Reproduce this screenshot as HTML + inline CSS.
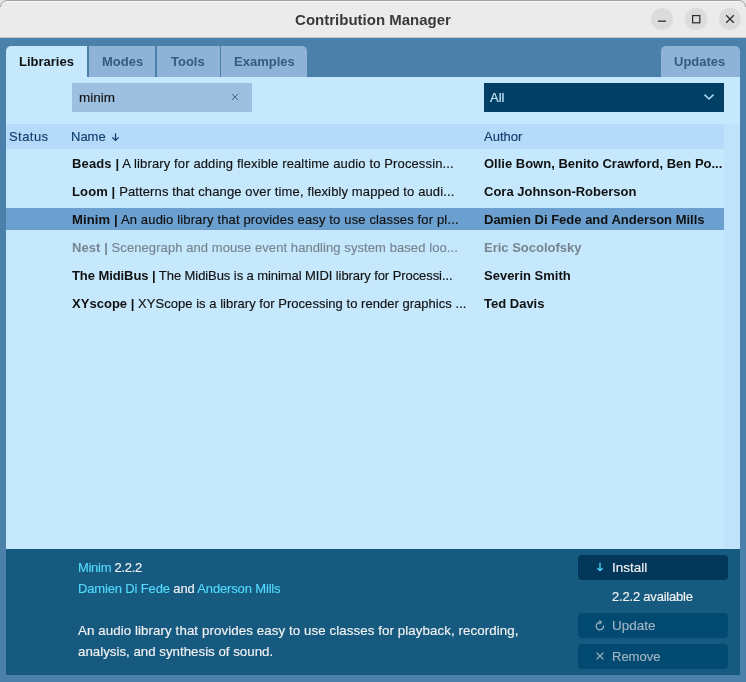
<!DOCTYPE html>
<html><head><meta charset="utf-8">
<style>
*{margin:0;padding:0;box-sizing:border-box}
html,body{-webkit-font-smoothing:antialiased;width:746px;height:682px;overflow:hidden;background:#4a80aa;font-family:"Liberation Sans",sans-serif}
.abs{position:absolute}
.t{position:absolute;white-space:nowrap;line-height:1}
#title{left:0;top:0;width:746px;height:38px;background:#ebebeb;border-radius:11px 11px 0 0;border-bottom:1px solid #c4c4c4}
.wb{position:absolute;top:8px;width:22px;height:22px;border-radius:50%;background:#dcdcdc}
.tab{position:absolute;top:46px;height:31px;background:#8fb3d6;color:#335c80;font-weight:bold;font-size:13px}
.tab span{position:absolute;top:9px;line-height:1;white-space:nowrap}
#panel{left:6px;top:77px;width:734px;height:472px;background:#c5e8fd}
#search{left:72px;top:83px;width:180px;height:29px;background:#9dc0e0}
#drop{left:484px;top:83px;width:240px;height:29px;background:#023f64}
#hdr{left:6px;top:124px;width:718px;height:25px;background:#b5dafa}
.hd{position:absolute;top:130px;font-size:13px;color:#123f6a;line-height:1}
.row{position:absolute;left:6px;width:718px;height:28px;font-size:13px;color:#111}
.row .n{position:absolute;left:66px;top:8px;white-space:nowrap;line-height:1}
.row .a{position:absolute;left:478px;top:8px;font-weight:bold;white-space:nowrap;line-height:1;letter-spacing:0}
#sel{left:6px;top:208px;width:718px;height:22px;background:#6a9fcf}
#strip{left:724px;top:124px;width:16px;height:425px;background:#c0e3fb}
#bottom{left:6px;top:549px;width:734px;height:126px;background:#175a80}
.btn{position:absolute;left:578px;width:150px;height:25px;border-radius:4px;background:#024a72}
.bt{position:absolute;left:612px;font-size:13.5px;line-height:1;white-space:nowrap}
.lk{color:#52d9fb}
.wt{color:#f2f2f2}
.t,.tab span,.row,.hd,.bt{will-change:transform;-webkit-text-stroke:0.15px currentColor}
b,.row .a,.tab span,.tbold{-webkit-text-stroke:0!important}
</style></head><body>
<svg class="abs" style="left:0;top:0" width="746" height="38"><rect x="0" y="0" width="746" height="38" fill="#e6e6e6"/><path d="M0 38 V7 A7 7 0 0 1 7 0 H739 A7 7 0 0 1 746 7 V38 Z" fill="#ebebeb"/><path d="M0.5 7 A6.5 6.5 0 0 1 7 0.5 H739 A6.5 6.5 0 0 1 745.5 7" fill="none" stroke="#a0a0a0" stroke-width="1"/><path d="M6 1.5 H740" fill="none" stroke="#fafafa" stroke-width="1"/><rect x="0" y="37" width="746" height="1" fill="#c4c4c4"/></svg>
<div class="t tbold" style="left:0;width:746px;text-align:center;top:12px;font-weight:bold;font-size:15px;color:#3a3a3a">Contribution Manager</div>
<div class="wb" style="left:651px"></div>
<div class="wb" style="left:685px"></div>
<div class="wb" style="left:719px"></div>
<svg class="abs" style="left:0;top:0" width="746" height="40">
<line x1="658" y1="21.2" x2="666" y2="21.2" stroke="#2e2e2e" stroke-width="1.3"/>
<rect x="692.6" y="15.6" width="7.2" height="7.2" fill="none" stroke="#2e2e2e" stroke-width="1.25"/>
<path d="M726.2 15.2 L733.8 22.8 M733.8 15.2 L726.2 22.8" stroke="#2e2e2e" stroke-width="1.3"/>
</svg>
<div class="tab" style="left:6px;width:81px;background:#c5e8fd;color:#111;border-radius:5px 0 0 0"><span style="left:13px">Libraries</span></div>
<div class="tab" style="left:89px;width:66px"><span style="left:13px">Modes</span></div>
<div class="tab" style="left:157px;width:63px"><span style="left:14px">Tools</span></div>
<div class="tab" style="left:221px;width:86px;border-radius:0 5px 0 0"><span style="left:13px">Examples</span></div>
<div class="tab" style="left:661px;width:79px;border-radius:5px 5px 0 0"><span style="left:13px">Updates</span></div>
<div id="panel" class="abs"></div>
<div id="search" class="abs"></div>
<div class="t" style="left:79px;top:91px;font-size:13.5px;color:#111">minim</div>
<svg class="abs" style="left:225px;top:87px" width="20" height="20"><path d="M6.8 6.8 L13.2 13.2 M13.2 6.8 L6.8 13.2" stroke="#3a6a90" stroke-width="1.0"/></svg>
<div id="drop" class="abs"></div>
<div class="t" style="left:490px;top:91px;font-size:13px;color:#c5e8fd">All</div>
<svg class="abs" style="left:695px;top:85px" width="30" height="25"><path d="M9.5 9.6 L14 14 L18.5 9.6" fill="none" stroke="#a8d8f8" stroke-width="1.6"/></svg>
<div id="hdr" class="abs"></div>
<div id="strip" class="abs"></div>
<div class="hd" style="left:9px;letter-spacing:0.45px">Status</div>
<div class="hd" style="left:71px">Name</div>
<svg class="abs" style="left:100px;top:125px" width="30" height="23"><path d="M15.5 8.2 V15.8 M12.3 12.3 L15.5 15.5 L18.7 12.3" fill="none" stroke="#0d3a65" stroke-width="1.2"/></svg>
<div class="hd" style="left:484px">Author</div>
<div id="sel" class="abs"></div>
<div class="row" style="top:149px;letter-spacing:0.13px"><span class="n"><b>Beads |</b> A library for adding flexible realtime audio to Processin...</span><span class="a">Ollie Bown, Benito Crawford, Ben Po...</span></div>
<div class="row" style="top:177px;letter-spacing:0.125px"><span class="n"><b>Loom |</b> Patterns that change over time, flexibly mapped to audi...</span><span class="a">Cora Johnson-Roberson</span></div>
<div class="row" style="top:205px;letter-spacing:0.15px"><span class="n"><b>Minim |</b> An audio library that provides easy to use classes for pl...</span><span class="a">Damien Di Fede and Anderson Mills</span></div>
<div class="row" style="top:233px;color:#758592;letter-spacing:0.08px"><span class="n"><b>Nest |</b> Scenegraph and mouse event handling system based loo...</span><span class="a">Eric Socolofsky</span></div>
<div class="row" style="top:261px;letter-spacing:-0.075px"><span class="n"><b>The MidiBus |</b> The MidiBus is a minimal MIDI library for Processi...</span><span class="a">Severin Smith</span></div>
<div class="row" style="top:289px;letter-spacing:0.03px"><span class="n"><b>XYscope |</b> XYScope is a library for Processing to render graphics ...</span><span class="a">Ted Davis</span></div>
<div id="bottom" class="abs"></div>
<div class="t" style="left:78px;top:561px;font-size:13px;letter-spacing:-0.3px"><span class="lk">Minim</span> <span class="wt">2.2.2</span></div>
<div class="t" style="left:78px;top:582px;font-size:13px;letter-spacing:-0.15px"><span class="lk">Damien Di Fede</span> <span class="wt">and</span> <span class="lk">Anderson Mills</span></div>
<div class="t wt" style="left:78px;top:624px;font-size:13.3px;letter-spacing:0.09px">An audio library that provides easy to use classes for playback, recording,</div>
<div class="t wt" style="left:78px;top:645px;font-size:13.3px">analysis, and synthesis of sound.</div>
<div class="btn" style="top:555px;background:#02375a"></div>
<div class="bt wt" style="top:561px">Install</div>
<svg class="abs" style="left:590px;top:558px" width="20" height="20"><path d="M10 4.8 V12.6 M7.4 10.2 L10 12.7 L12.6 10.2" fill="none" stroke="#50d8fc" stroke-width="1.3"/></svg>
<div class="bt wt" style="top:590px;font-size:13px;letter-spacing:-0.2px">2.2.2 available</div>
<div class="btn" style="top:613px"></div>
<div class="bt" style="top:619px;color:#a3b5c4">Update</div>
<svg class="abs" style="left:590px;top:614px" width="20" height="25"><path d="M9.9 8.4 A3.7 3.7 0 1 0 13.5 11.4" fill="none" stroke="#a3b5c4" stroke-width="1.2"/><path d="M9.4 6.3 L11.3 8.3 L9.4 10.2" fill="none" stroke="#a3b5c4" stroke-width="1.2"/></svg>
<div class="btn" style="top:644px"></div>
<div class="bt" style="top:650px;color:#a3b5c4;font-size:13px">Remove</div>
<svg class="abs" style="left:590px;top:645px" width="20" height="25"><path d="M6.6 7.6 L13.4 14.4 M13.4 7.6 L6.6 14.4" stroke="#a3b5c4" stroke-width="1.2"/></svg>
</body></html>
